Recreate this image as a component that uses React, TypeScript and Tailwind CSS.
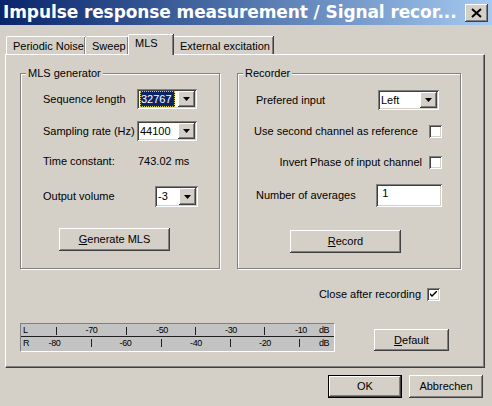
import type {ReactNode} from 'react'

const raised =
  'shadow-[inset_-1px_-1px_#404040,inset_1px_1px_#ffffff,inset_-2px_-2px_#808080,inset_2px_2px_#d4d0c8]'
const sunken =
  'shadow-[inset_1px_1px_#808080,inset_-1px_-1px_#ffffff,inset_2px_2px_#404040,inset_-2px_-2px_#d4d0c8]'

const topScale: {x: number; label?: string}[] = [
  {x: 35},
  {x: 70.5, label: '-70'},
  {x: 105},
  {x: 141, label: '-50'},
  {x: 174},
  {x: 210, label: '-30'},
  {x: 243},
  {x: 280, label: '-10'},
]

const bottomScale: {x: number; label?: string}[] = [
  {x: 33.5, label: '-80'},
  {x: 70},
  {x: 104.5, label: '-60'},
  {x: 140},
  {x: 175, label: '-40'},
  {x: 209},
  {x: 244, label: '-20'},
  {x: 278},
]

function Arrow() {
  return (
    <svg width="7" height="4" viewBox="0 0 7 4">
      <polygon points="0,0 7,0 3.5,4" fill="#000" />
    </svg>
  )
}

function Combo({value, className, selected}: {value: string; className: string; selected?: boolean}) {
  return (
    <div className={`flex bg-white p-[2px] ${sunken} ${className}`}>
      <div className="flex flex-1 items-center pl-[1px] min-w-0">
        {selected ? (
          <span className="h-full flex items-center bg-[#0a246a] text-white border border-dotted border-[#d8cc50] pr-[2px]">
            {value}
          </span>
        ) : (
          <span>{value}</span>
        )}
      </div>
      <div className={`w-[17px] h-full flex items-center justify-center bg-[#d4d0c8] ${raised}`}>
        <Arrow />
      </div>
    </div>
  )
}

function CheckBox({checked}: {checked?: boolean}) {
  return (
    <div className={`w-[13px] h-[13px] shrink-0 bg-white flex items-center justify-center ${sunken}`}>
      {checked && (
        <svg width="7" height="7" viewBox="0 0 7 7">
          <path d="M0 2 L0 4 L2 6 L7 1 L7 -1 L2 4 Z" fill="#000" />
        </svg>
      )}
    </div>
  )
}

function Button({children, className}: {children: ReactNode; className: string}) {
  return (
    <div className={`flex items-center justify-center bg-[#d4d0c8] ${raised} ${className}`}>{children}</div>
  )
}

function GroupBox({label, className, children}: {label: string; className: string; children: ReactNode}) {
  return (
    <div className={`relative border border-[#808080] shadow-[inset_1px_1px_#ffffff,1px_1px_#ffffff] ${className}`}>
      <span className="absolute -top-[8px] left-[5px] px-[2px] bg-[#d4d0c8] leading-[14px]">{label}</span>
      {children}
    </div>
  )
}

function Tab({children, className}: {children: ReactNode; className: string}) {
  return (
    <div
      className={`h-[18px] border-t border-l border-white rounded-tl-[2px] shadow-[inset_-1px_0_#808080,1px_0_#404040] pl-[6px] pt-[2px] leading-[14px] ${className}`}
    >
      {children}
    </div>
  )
}

function Meter() {
  return (
    <div className="w-[315px] h-[29px] bg-[#c3c3c3] border-t border-l border-[#808080] border-r-white border-b-white border-r border-b flex flex-col text-[9px] tracking-[-0.4px] leading-[13px]">
      <div className="relative h-[13px] border-b border-[#202020]">
        <span className="absolute left-[2px] top-0">L</span>
        {topScale.map(t =>
          t.label ? (
            <span key={t.x} className="absolute top-0 -translate-x-1/2" style={{left: t.x}}>
              {t.label}
            </span>
          ) : (
            <div key={t.x} className="absolute top-[3px] w-px h-[8px] bg-[#202020]" style={{left: t.x}} />
          ),
        )}
        <span className="absolute left-[298px] top-0">dB</span>
      </div>
      <div className="relative h-[13px]">
        <span className="absolute left-[2px] top-0">R</span>
        {bottomScale.map(t =>
          t.label ? (
            <span key={t.x} className="absolute top-0 -translate-x-1/2" style={{left: t.x}}>
              {t.label}
            </span>
          ) : (
            <div key={t.x} className="absolute top-[2px] w-px h-[8px] bg-[#202020]" style={{left: t.x}} />
          ),
        )}
        <span className="absolute left-[298px] top-0">dB</span>
      </div>
    </div>
  )
}

export default function App() {
  return (
    <div className="w-[492px] h-[406px] overflow-hidden whitespace-nowrap bg-[#d4d0c8] text-black text-[11px] font-['Liberation_Sans',Arial,sans-serif]">
      {/* title bar */}
      <div className="h-[25px] flex items-center pl-[3px] pr-[4px] bg-gradient-to-r from-[#0a246a] to-[#a6caf0]">
        <span className="text-white font-bold text-[17px] leading-none font-['DejaVu_Sans',sans-serif] tracking-[-0.1px]">
          Impulse response measurement / Signal recor...
        </span>
        <div className={`ml-auto shrink-0 w-[23px] h-[18px] flex items-center justify-center bg-[#d4d0c8] ${raised}`}>
          <svg width="11" height="10" viewBox="0 0 11 10">
            <path d="M1 1 L10 9 M10 1 L1 9" stroke="#000" strokeWidth="2" />
          </svg>
        </div>
      </div>

      {/* tabs */}
      <div className="flex items-end pl-[6px] h-[20px] mt-[9px]">
        <Tab className="w-[79px]">Periodic Noise</Tab>
        <Tab className="w-[43px]">Sweep</Tab>
        <div className="relative z-10 -mb-px h-[21px] w-[45px] bg-[#d4d0c8] border-t border-l border-white rounded-tl-[2px] shadow-[inset_-1px_0_#808080,1px_0_#404040] pl-[6px] pt-[1px] leading-[14px]">
          MLS
        </div>
        <Tab className="w-[100px]">External excitation</Tab>
      </div>

      {/* tab panel */}
      <div className="ml-[5px] w-[480px] h-[314px] border border-t-white border-l-white border-r-[#404040] border-b-[#404040] shadow-[inset_-1px_-1px_#808080] pl-[14px] pt-[18px] flex flex-col">
        <div className="flex gap-[17px]">
          <GroupBox label="MLS generator" className="w-[200px] h-[196px]">
            <div className="flex flex-col pt-[15px] pl-[22px]">
              <div className="flex items-center h-[20px]">
                <span className="w-[94px]">Sequence length</span>
                <Combo value="32767" selected className="w-[60px] h-[20px]" />
              </div>
              <div className="flex items-center h-[20px] mt-[12px]">
                <span className="w-[94px]">Sampling rate (Hz)</span>
                <Combo value="44100" className="w-[60px] h-[20px]" />
              </div>
              <div className="flex items-center h-[20px] mt-[10px]">
                <span className="w-[95px]">Time constant:</span>
                <span>743.02 ms</span>
              </div>
              <div className="flex items-center h-[21px] mt-[15px]">
                <span className="w-[112px]">Output volume</span>
                <Combo value="-3" className="w-[43px] h-[21px]" />
              </div>
              <Button className="mt-[21px] ml-[16px] w-[111px] h-[23px]">
                <span>
                  <span className="underline">G</span>enerate MLS
                </span>
              </Button>
            </div>
          </GroupBox>

          <GroupBox label="Recorder" className="w-[224px] h-[196px]">
            <div className="flex flex-col pt-[16px] pl-[18px] pr-[18px]">
              <div className="flex items-center h-[20px]">
                <span className="w-[122px]">Prefered input</span>
                <Combo value="Left" className="w-[61px] h-[20px]" />
              </div>
              <div className="flex items-center justify-end h-[13px] mt-[15px]">
                <span className="mr-[11px]">Use second channel as reference</span>
                <CheckBox />
              </div>
              <div className="flex items-center justify-end h-[13px] mt-[18px]">
                <span className="mr-[7px]">Invert Phase of input channel</span>
                <CheckBox />
              </div>
              <div className="flex items-center h-[23px] mt-[15px]">
                <span className="w-[121px]">Number of averages</span>
                <div className={`w-[66px] h-[23px] bg-white pl-[6px] pt-[3px] leading-[13px] ${sunken}`}>1</div>
              </div>
              <Button className="mt-[23px] ml-[34px] w-[111px] h-[23px]">
                <span>
                  <span className="underline">R</span>ecord
                </span>
              </Button>
            </div>
          </GroupBox>
        </div>

        <div className="flex items-center justify-end h-[13px] mt-[19px] mr-[44px]">
          <span className="mr-[6px]">Close after recording</span>
          <CheckBox checked />
        </div>

        <div className="flex items-start mt-[22px]">
          <Meter />
          <Button className="ml-[39px] mt-[6px] w-[75px] h-[22px]">
            <span>
              <span className="underline">D</span>efault
            </span>
          </Button>
        </div>
      </div>

      {/* dialog buttons */}
      <div className="flex justify-end gap-[7px] pr-[9px] mt-[7px]">
        <div className="w-[74px] h-[23px] border border-black">
          <Button className="w-full h-full">OK</Button>
        </div>
        <Button className="w-[74px] h-[23px]">Abbrechen</Button>
      </div>
    </div>
  )
}
